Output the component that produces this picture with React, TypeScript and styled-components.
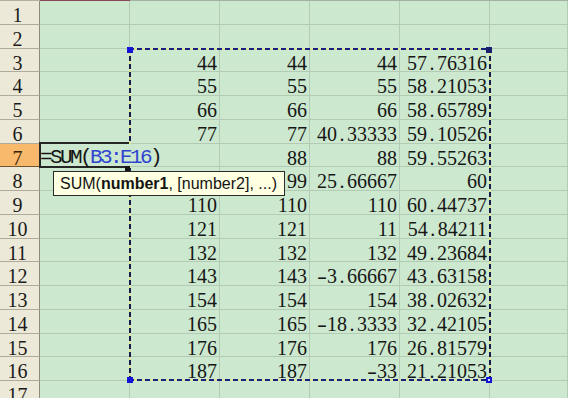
import React from 'react';
import styled, { createGlobalStyle } from 'styled-components';

const ROW_H = 23.75;
const GREEN = '#cce8cf';
const GRID = '#b3cab4';

const GlobalStyle = createGlobalStyle`
  html, body {
    margin: 0;
    padding: 0;
    background: ${GREEN};
  }

  body {
    width: 568px;
    height: 398px;
    overflow: hidden;
  }
`;

// columns B..E for rows 3..16 (B7 and B8 sit under the edit box and the tip)
const data: Record<number, string[]> = {
  3: ['44', '44', '44', '57.76316'],
  4: ['55', '55', '55', '58.21053'],
  5: ['66', '66', '66', '58.65789'],
  6: ['77', '77', '40.33333', '59.10526'],
  7: ['', '88', '88', '59.55263'],
  8: ['', '99', '25.66667', '60'],
  9: ['110', '110', '110', '60.44737'],
  10: ['121', '121', '11', '54.84211'],
  11: ['132', '132', '132', '49.23684'],
  12: ['143', '143', '-3.66667', '43.63158'],
  13: ['154', '154', '154', '38.02632'],
  14: ['165', '165', '-18.3333', '32.42105'],
  15: ['176', '176', '176', '26.81579'],
  16: ['187', '187', '-33', '21.21053']
};

const ACTIVE_ROW = 7;

const Sheet = styled.div`
  position: relative;
  width: 568px;
  height: 398px;
  overflow: hidden;
  background: ${GREEN};
  font-family: 'Liberation Serif', serif;
`;

const columns = `40px repeat(5, 90px) 1fr`;

const HeaderStrip = styled.div`
  display: grid;
  grid-template-columns: ${columns};
  height: 1px;
`;

const StripPart = styled.div<{ $tone: 'head' | 'active' | 'plain' }>`
  background: ${(p) => (p.$tone === 'active' ? '#8a4656' : p.$tone === 'head' ? '#b4b0a0' : '#a3b0a4')};
`;

const Grid = styled.div`
  display: grid;
  grid-template-columns: ${columns};
  grid-auto-rows: ${ROW_H}px;
`;

const RowHead = styled.div<{ $active?: boolean }>`
  box-sizing: border-box;
  overflow: hidden;
  padding: 2px 4px 0 0;
  border-right: 1px solid ${(p) => (p.$active ? '#6e5530' : '#8e8b7d')};
  border-bottom: 1px solid ${(p) => (p.$active ? '#6e5530' : '#aeab9c')};
  background: ${(p) => (p.$active ? '#f9b96c' : '#ece9d8')};
  color: ${(p) => (p.$active ? '#3a2408' : '#1a1a1a')};
  font-size: 20px;
  line-height: 24px;
  text-align: center;
`;

const Cell = styled.div`
  box-sizing: border-box;
  overflow: hidden;
  padding: 2px 2px 0 0;
  border-right: 1px solid ${GRID};
  border-bottom: 1px solid ${GRID};
  color: #161616;
  font-size: 20px;
  line-height: 24px;
  text-align: right;
  white-space: nowrap;
`;

// SimSun-like half width for the dot and the minus sign
const Half = styled.span<{ $minus?: boolean }>`
  display: inline-block;
  width: 10px;
  text-align: center;
  transform: ${(p) => (p.$minus ? 'scaleX(1.5)' : 'none')};
`;

const Marquee = styled.div`
  position: absolute;
  left: 129px;
  top: 48px;
  width: 362px;
  height: 333px;
  z-index: 2;
  pointer-events: none;
  background:
    repeating-linear-gradient(90deg, #18207e 0 5px, #dfe894 5px 8px) top left / 100% 2px no-repeat,
    repeating-linear-gradient(90deg, #18207e 0 5px, #dfe894 5px 8px) bottom left / 100% 2px no-repeat,
    repeating-linear-gradient(180deg, #141a50 0 5px, #dfe894 5px 8px) top left / 2px 100% no-repeat,
    repeating-linear-gradient(180deg, #141a50 0 5px, #dfe894 5px 8px) top right / 2px 100% no-repeat;
`;

type Corner = 'tl' | 'tr' | 'bl' | 'br';

const Handle = styled.span<{ $corner: Corner }>`
  position: absolute;
  box-sizing: border-box;
  width: 6px;
  height: 6px;
  ${(p) => (p.$corner[0] === 't' ? 'top: -1px;' : 'bottom: -2px;')}
  ${(p) => (p.$corner[1] === 'l' ? 'left: -2px;' : 'right: -1px;')}
  background: ${(p) => (p.$corner === 'br' ? '#d8e6f4' : p.$corner === 'tr' ? '#1a1f6e' : '#1414d8')};
  border: ${(p) => (p.$corner === 'br' ? '2px solid #1414d8' : 'none')};
`;

const EditBox = styled.div`
  position: absolute;
  left: 40px;
  top: 144px;
  width: 179px;
  height: 22px;
  z-index: 3;
  background: ${GREEN};

  &::before {
    content: '';
    position: absolute;
    left: -1px;
    top: -2px;
    width: 90px;
    height: 26px;
    box-sizing: border-box;
    border: 2px solid #262626;
    border-right: none;
  }
`;

const EditText = styled.div`
  position: relative;
  padding-top: 3px;
  color: #141414;
  font-family: 'Liberation Mono', monospace;
  font-size: 21px;
  letter-spacing: -2.6px;
  line-height: 22px;
  white-space: nowrap;
`;

const Ref = styled.span`
  color: #3145d0;
`;

const FillHandle = styled.span`
  position: absolute;
  left: 125px;
  top: 166px;
  width: 5px;
  height: 5px;
  z-index: 3;
  background: #161616;
`;

const Tooltip = styled.div`
  position: absolute;
  left: 53px;
  top: 171px;
  width: 232px;
  height: 25px;
  box-sizing: border-box;
  z-index: 4;
  padding-left: 6px;
  border: 1px solid #2a2a2a;
  background: #ffffe1;
  color: #141414;
  font-family: 'Liberation Sans', sans-serif;
  font-size: 16px;
  line-height: 23px;
  white-space: nowrap;

  b {
    font-weight: 700;
  }
`;

function Num ({ value }: { value: string }) {
  return (
    <>
      {value.split('').map((ch, i) =>
        ch === '.' || ch === '-'
          ? <Half $minus={ch === '-'} key={i}>{ch}</Half>
          : ch
      )}
    </>
  );
}

export default function App () {
  const rowNumbers = Array.from({ length: 17 }, (_, i) => i + 1);

  return (
    <>
      <GlobalStyle />
      <Sheet>
        <HeaderStrip>
          <StripPart $tone='head' />
          <StripPart $tone='active' />
          {[0, 1, 2, 3, 4].map((i) => <StripPart $tone='plain' key={i} />)}
        </HeaderStrip>
        <Grid>
          {rowNumbers.map((r) => {
            const values = data[r] || ['', '', '', ''];

            return (
              <React.Fragment key={r}>
                <RowHead $active={r === ACTIVE_ROW}>{r}</RowHead>
                <Cell />
                {values.map((v, i) => (
                  <Cell key={i}>{v && <Num value={v} />}</Cell>
                ))}
                <Cell />
              </React.Fragment>
            );
          })}
        </Grid>

        <Marquee>
          <Handle $corner='tl' />
          <Handle $corner='tr' />
          <Handle $corner='bl' />
          <Handle $corner='br' />
        </Marquee>

        <EditBox>
          <EditText>=SUM(<Ref>B3:E16</Ref>)</EditText>
        </EditBox>
        <FillHandle />

        <Tooltip>
          SUM(<b>number1</b>, [number2], ...)
        </Tooltip>
      </Sheet>
    </>
  );
}
